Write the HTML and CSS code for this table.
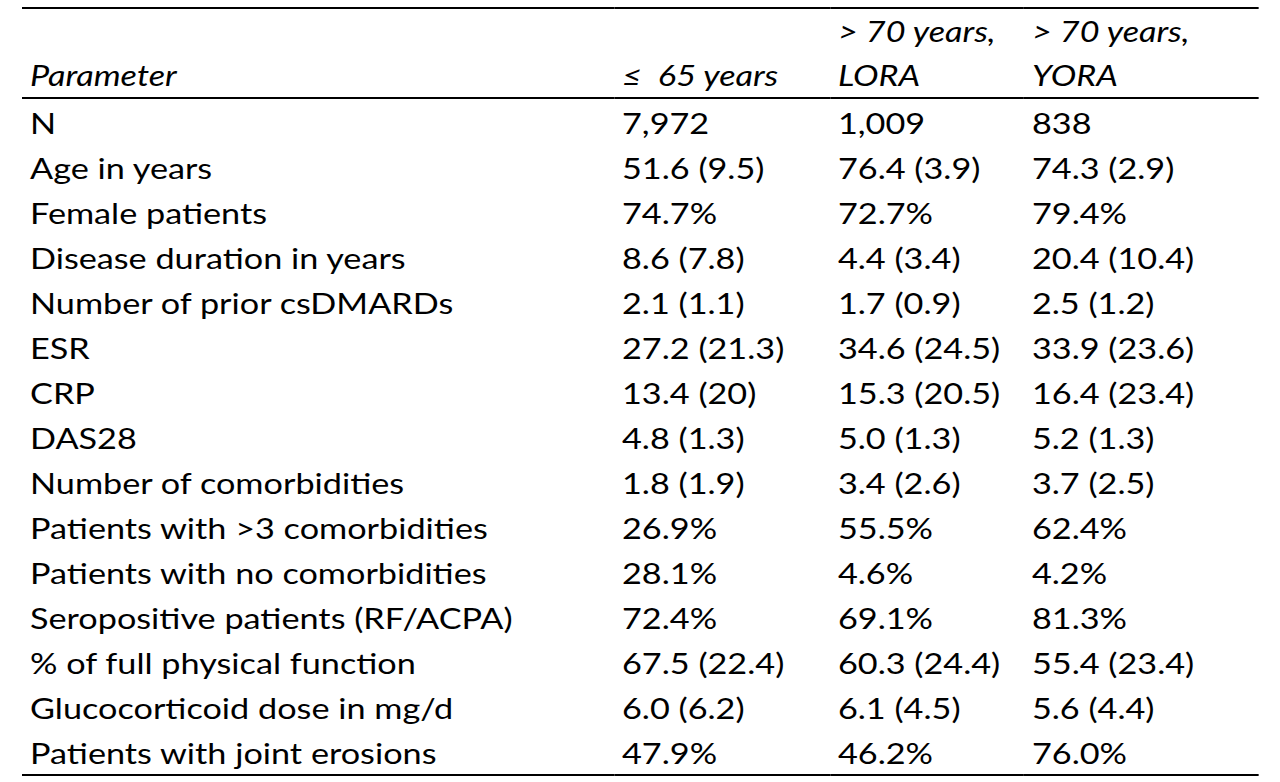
FILE: index.html
```html
<!DOCTYPE html>
<html lang="en">
<head>
<meta charset="utf-8">
<title>Patient characteristics</title>
<link rel="stylesheet" href="styles.css">
</head>
<body>
<table class="data-table">
  <colgroup>
    <col class="col-param">
    <col class="col-a">
    <col class="col-b">
    <col class="col-c">
  </colgroup>
  <thead>
    <tr>
      <th>Parameter</th>
      <th>&le;&nbsp; 65 years</th>
      <th>&gt; 70 years,<br>LORA</th>
      <th>&gt; 70 years,<br>YORA</th>
    </tr>
  </thead>
  <tbody>
    <tr><td>N</td><td>7,972</td><td>1,009</td><td>838</td></tr>
    <tr><td>Age in years</td><td>51.6 (9.5)</td><td>76.4 (3.9)</td><td>74.3 (2.9)</td></tr>
    <tr><td>Female patients</td><td>74.7%</td><td>72.7%</td><td>79.4%</td></tr>
    <tr><td>Disease duration in years</td><td>8.6 (7.8)</td><td>4.4 (3.4)</td><td>20.4 (10.4)</td></tr>
    <tr><td>Number of prior csDMARDs</td><td>2.1 (1.1)</td><td>1.7 (0.9)</td><td>2.5 (1.2)</td></tr>
    <tr><td>ESR</td><td>27.2 (21.3)</td><td>34.6 (24.5)</td><td>33.9 (23.6)</td></tr>
    <tr><td>CRP</td><td>13.4 (20)</td><td>15.3 (20.5)</td><td>16.4 (23.4)</td></tr>
    <tr><td>DAS28</td><td>4.8 (1.3)</td><td>5.0 (1.3)</td><td>5.2 (1.3)</td></tr>
    <tr><td>Number of comorbidities</td><td>1.8 (1.9)</td><td>3.4 (2.6)</td><td>3.7 (2.5)</td></tr>
    <tr><td>Patients with &gt;3 comorbidities</td><td>26.9%</td><td>55.5%</td><td>62.4%</td></tr>
    <tr><td>Patients with no comorbidities</td><td>28.1%</td><td>4.6%</td><td>4.2%</td></tr>
    <tr><td>Seropositive patients (RF/ACPA)</td><td>72.4%</td><td>69.1%</td><td>81.3%</td></tr>
    <tr><td>% of full physical function</td><td>67.5 (22.4)</td><td>60.3 (24.4)</td><td>55.4 (23.4)</td></tr>
    <tr><td>Glucocorticoid dose in mg/d</td><td>6.0 (6.2)</td><td>6.1 (4.5)</td><td>5.6 (4.4)</td></tr>
    <tr><td>Patients with joint erosions</td><td>47.9%</td><td>46.2%</td><td>76.0%</td></tr>
  </tbody>
</table>
</body>
</html>
```

FILE: styles.css
```css
html, body {
  margin: 0;
  padding: 0;
  background: #ffffff;
}

body {
  font-family: Lato, "Liberation Sans", sans-serif;
  color: #000000;
  font-size: 29px;
}

/* The source table is rendered slightly wide; scale horizontally to match. */
.data-table {
  margin: 7px 0 0 22px;
  width: 1047.5px;
  border-collapse: collapse;
  table-layout: fixed;
  border-top: 2px solid #000;
  border-bottom: 2px solid #000;
  transform: scaleX(1.18);
  transform-origin: 0 0;
}

.col-param { width: 501.7px; }
.col-a { width: 183px; }
.col-b { width: 164.4px; }
.col-c { width: 198.4px; }

.data-table th,
.data-table td {
  padding: 0 0 0 6.8px;
  text-align: left;
  white-space: nowrap;
}

.data-table th {
  font-weight: normal;
  font-style: italic;
  vertical-align: bottom;
  line-height: 44px;
  height: 88px;
  border-bottom: 2px solid #000;
}

.data-table td {
  height: 42px;
  padding-top: 3px;
  line-height: 42px;
  vertical-align: middle;
}
```
